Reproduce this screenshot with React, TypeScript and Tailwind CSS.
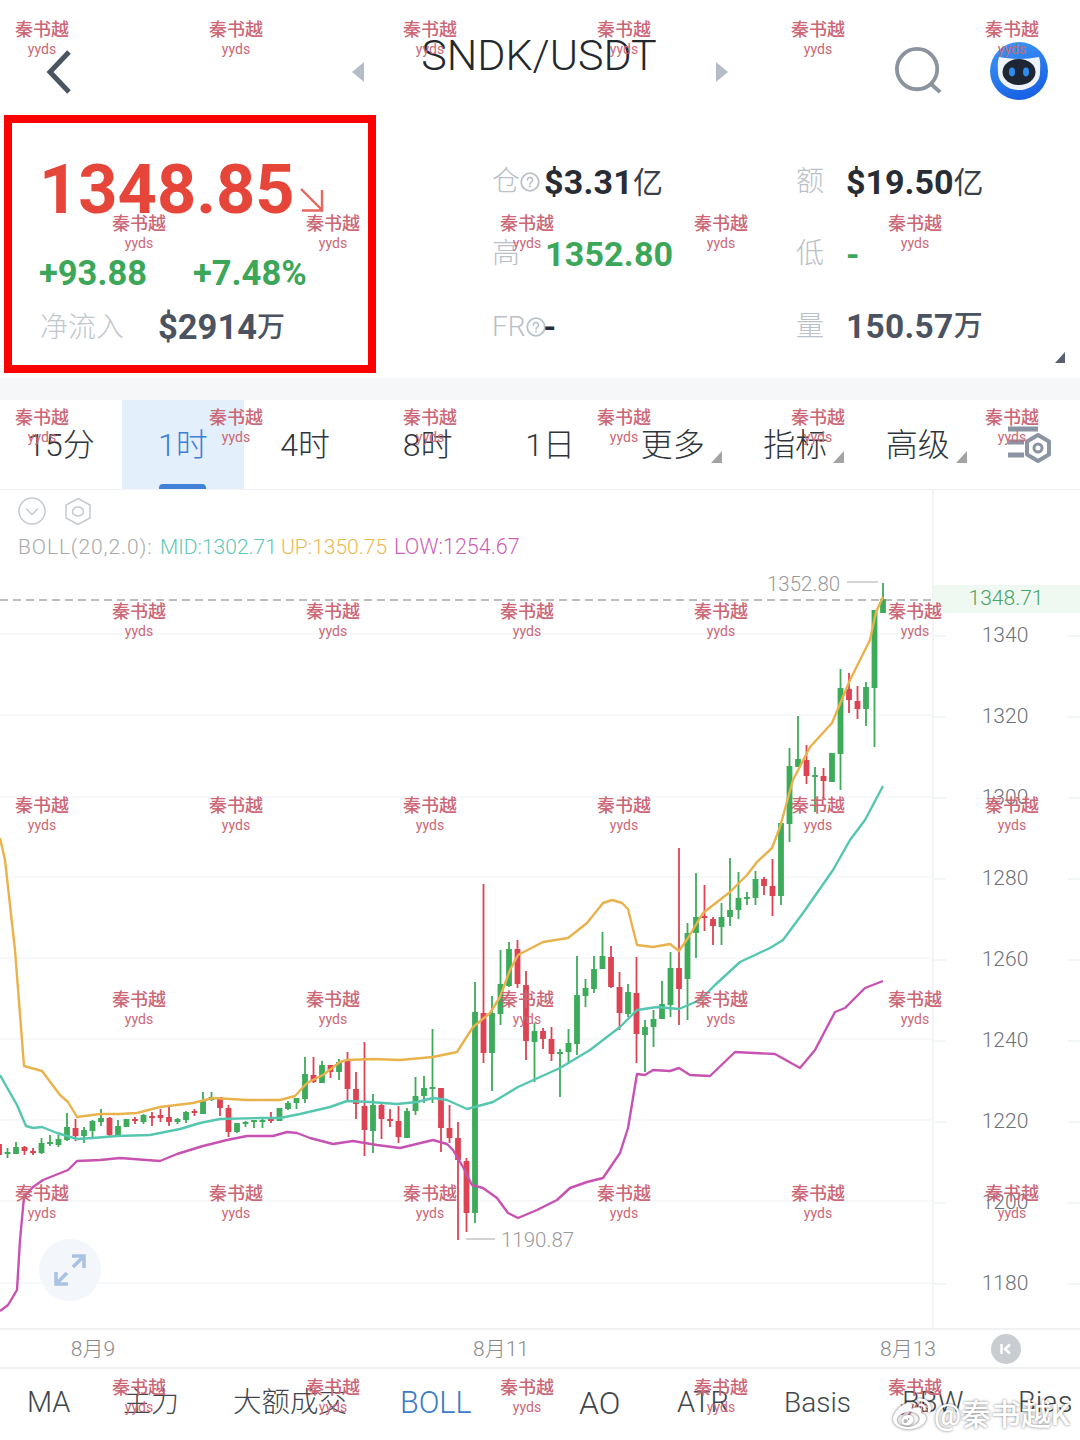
import React from 'react';
import { FaWeibo } from 'react-icons/fa';

// [wickTop, wickBottom, bodyTop, bodyBottom, isGreen], newest first
const CANDLES: [number, number, number, number, number][] = [
  [583, 613, 599, 613, 1], [610, 747, 610, 688, 1], [682, 726, 687, 709, 1], [686, 719, 701, 709, 0],
  [673, 713, 689, 700, 0], [669, 790, 688, 754, 1], [753, 782, 753, 782, 1], [768, 800, 776, 781, 0],
  [767, 812, 775, 777, 1], [745, 784, 760, 776, 0], [716, 767, 759, 767, 1], [748, 842, 766, 824, 1],
  [823, 905, 823, 896, 1], [859, 916, 886, 896, 0], [877, 895, 879, 886, 0], [871, 905, 879, 898, 1],
  [892, 905, 897, 899, 1], [872, 919, 898, 910, 1], [858, 926, 910, 917, 1], [903, 945, 917, 927, 1],
  [917, 945, 919, 926, 0], [885, 931, 916, 918, 0], [873, 958, 917, 933, 1], [923, 1020, 933, 979, 1],
  [848, 1025, 968, 989, 0], [952, 1017, 968, 1005, 1], [981, 1019, 1004, 1019, 1], [1010, 1047, 1019, 1027, 1],
  [1020, 1072, 1027, 1035, 1], [957, 1063, 993, 1034, 0], [984, 1017, 992, 1014, 1], [972, 1030, 987, 1013, 0],
  [946, 988, 957, 987, 0], [932, 969, 956, 969, 1], [956, 993, 969, 989, 1], [979, 1007, 988, 996, 1],
  [956, 1055, 995, 1044, 1], [1029, 1064, 1043, 1052, 1], [1049, 1097, 1052, 1054, 1], [1027, 1061, 1039, 1054, 0],
  [1028, 1049, 1031, 1039, 0], [1023, 1082, 1031, 1042, 1], [971, 1060, 985, 1041, 0], [940, 988, 949, 984, 0],
  [942, 987, 949, 986, 1], [950, 1025, 984, 1014, 1], [996, 1091, 1013, 1053, 1], [884, 1063, 1013, 1053, 0],
  [982, 1223, 1012, 1213, 1], [1158, 1232, 1161, 1213, 0], [1122, 1240, 1138, 1160, 0], [1105, 1143, 1128, 1138, 0],
  [1088, 1152, 1088, 1128, 0], [1029, 1103, 1087, 1089, 1], [1076, 1103, 1088, 1096, 1], [1077, 1115, 1096, 1111, 1],
  [1108, 1138, 1111, 1138, 1], [1106, 1143, 1121, 1137, 0], [1109, 1127, 1119, 1121, 0], [1102, 1139, 1105, 1119, 0],
  [1094, 1153, 1105, 1131, 1], [1042, 1156, 1106, 1130, 0], [1072, 1119, 1089, 1104, 0], [1052, 1100, 1061, 1089, 0],
  [1059, 1080, 1062, 1072, 1], [1065, 1078, 1065, 1072, 0], [1061, 1083, 1065, 1083, 1], [1057, 1083, 1075, 1082, 0],
  [1057, 1103, 1074, 1099, 1], [1098, 1109, 1098, 1103, 1], [1101, 1110, 1103, 1109, 1], [1108, 1121, 1108, 1121, 1],
  [1112, 1123, 1119, 1121, 0], [1119, 1128, 1120, 1122, 1], [1120, 1128, 1120, 1122, 1], [1121, 1127, 1122, 1124, 1],
  [1123, 1133, 1123, 1132, 1], [1105, 1137, 1108, 1132, 0], [1097, 1116, 1097, 1108, 0], [1092, 1101, 1097, 1100, 1],
  [1092, 1114, 1100, 1114, 1], [1109, 1116, 1111, 1113, 0], [1111, 1123, 1112, 1120, 1], [1118, 1124, 1119, 1122, 1],
  [1107, 1126, 1117, 1122, 0], [1109, 1122, 1115, 1118, 0], [1112, 1126, 1116, 1118, 0], [1114, 1124, 1115, 1122, 1],
  [1117, 1124, 1119, 1121, 0], [1119, 1127, 1119, 1127, 1], [1120, 1137, 1126, 1136, 1], [1117, 1136, 1118, 1135, 0],
  [1109, 1126, 1118, 1122, 1], [1120, 1137, 1121, 1131, 1], [1127, 1143, 1130, 1136, 1], [1119, 1141, 1128, 1136, 0],
  [1113, 1141, 1127, 1140, 1], [1135, 1147, 1139, 1145, 1], [1135, 1146, 1142, 1144, 1], [1138, 1154, 1143, 1153, 1],
  [1148, 1155, 1151, 1153, 0], [1146, 1155, 1147, 1151, 0], [1142, 1154, 1147, 1154, 1], [1148, 1158, 1152, 1154, 1],
  [1138, 1159, 1144, 1155, 0],
];

const UP_LINE =
  '0,838 5,860 15,950 24,1066 42,1071 60,1095 68,1102 77,1117 100,1114 120,1114 137,1113 160,1107 193,1103 213,1098 247,1100 280,1100 295,1096 307,1083 323,1075 340,1062 347,1060 373,1059 400,1060 433,1057 457,1052 473,1027 490,1013 500,997 510,970 518,955 543,942 568,938 587,923 603,903 612,900 622,903 628,909 637,945 653,947 670,944 679,951 688,938 703,913 730,892 747,875 757,862 772,848 780,827 793,780 810,747 832,723 850,680 865,650 870,640 876,612 883,597';
const MID_LINE =
  '0,1075 17,1105 26,1126 33,1128 42,1127 57,1133 77,1139 93,1138 117,1136 150,1135 180,1129 200,1123 220,1119 260,1118 280,1118 300,1114 330,1107 347,1101 370,1102 397,1104 417,1102 433,1098 447,1100 467,1109 493,1102 518,1087 560,1068 590,1050 620,1027 637,1010 657,1007 679,1009 700,1000 715,985 740,962 770,948 783,940 803,913 833,870 850,840 865,820 883,786';
const LOW_LINE =
  '0,1311 8,1305 17,1290 20,1240 24,1197 33,1187 43,1180 68,1170 77,1161 100,1160 120,1158 160,1161 177,1154 203,1146 227,1140 247,1136 273,1136 287,1132 297,1133 310,1138 333,1144 353,1141 377,1145 400,1148 433,1140 447,1144 453,1150 463,1167 472,1185 483,1188 497,1198 508,1213 518,1218 537,1210 557,1200 570,1188 587,1182 603,1178 620,1153 628,1128 637,1074 645,1075 653,1070 670,1071 679,1068 690,1075 710,1076 735,1052 775,1054 800,1068 815,1050 835,1012 845,1008 865,988 883,981';

const GRID_Y = [634, 715, 797, 877, 958, 1039, 1120, 1201, 1283];
const AXIS = ['1340', '1320', '1300', '1280', '1260', '1240', '1220', '1200', '1180'];
const TABS = ['15分', '1时', '4时', '8时', '1日', '更多', '指标', '高级'];

function HelpDot() {
  return (
    <svg width="20" height="20" viewBox="0 0 20 20" className="shrink-0" fill="none">
      <circle cx="10" cy="10" r="8.8" stroke="#b9c0c8" strokeWidth="1.8" />
      <path d="M7.4 8a2.6 2.6 0 1 1 4 2.2c-.9.6-1.4 1-1.4 2" stroke="#b9c0c8" strokeWidth="1.6" strokeLinecap="round" />
      <circle cx="10" cy="14.6" r="1" fill="#b9c0c8" />
    </svg>
  );
}

function CornerArrow() {
  return (
    <svg width="11" height="12" viewBox="0 0 11 12" className="absolute right-[-17px] bottom-[6px]">
      <path d="M11 0V12H0Z" fill="#a3a3a3" />
    </svg>
  );
}

function Watermarks() {
  const rows = [0, 1, 2, 3, 4, 5, 6, 7];
  return (
    <div className="absolute inset-0 pointer-events-none flex flex-col pt-[19px]">
      {rows.map((r) => (
        <div key={r} className={r % 2 === 0 ? 'flex h-[194px] shrink-0 -ml-[55px]' : 'flex h-[194px] shrink-0 ml-[42px]'}>
          {[0, 1, 2, 3, 4, 5].map((c) => (
            <div key={c} className="w-[194px] shrink-0 flex flex-col items-center text-[#cb6776]">
              <span className="text-[18px] leading-[22px] font-medium">秦书越</span>
              <span className="text-[14px] leading-[16px]">yyds</span>
            </div>
          ))}
        </div>
      ))}
    </div>
  );
}

function Chart() {
  return (
    <svg width="932" height="838" viewBox="0 490 932 838" className="block [font-family:Roboto,sans-serif]">
      {GRID_Y.map((y) => (
        <line key={y} x1="0" x2="932" y1={y} y2={y} stroke="#f3f6f7" strokeWidth="1.5" />
      ))}
      <line x1="0" x2="932" y1="600" y2="600" stroke="#bdbdbd" strokeWidth="2" strokeDasharray="8 5" />
      {CANDLES.map((c, k) => {
        const x = 883 - k * 8.5;
        const color = c[4] ? '#3cab5a' : '#dc4453';
        return (
          <g key={k} fill={color}>
            <rect x={x - 0.9} y={c[0]} width="1.8" height={c[1] - c[0]} />
            <rect x={x - 2.9} y={c[2]} width="5.8" height={c[3] - c[2]} />
          </g>
        );
      })}
      <polyline points={LOW_LINE} fill="none" stroke="#c752b2" strokeWidth="2.4" strokeLinejoin="round" />
      <polyline points={MID_LINE} fill="none" stroke="#55c6b0" strokeWidth="2.4" strokeLinejoin="round" />
      <polyline points={UP_LINE} fill="none" stroke="#e9b24c" strokeWidth="2.4" strokeLinejoin="round" />
      <text x="767" y="591" fontSize="20.500" fontWeight="300" fill="#9a9a9a">1352.80</text>
      <line x1="847" x2="878" y1="582" y2="582" stroke="#c4c4c4" strokeWidth="1.5" />
      <line x1="466" x2="495" y1="1239" y2="1239" stroke="#c4c4c4" strokeWidth="1.5" />
      <text x="501" y="1247" fontSize="20.500" fontWeight="300" fill="#9a9a9a">1190.87</text>
    </svg>
  );
}

export default function App() {
  return (
    <div className="relative w-[1080px] h-[1440px] overflow-hidden bg-white [font-family:Roboto,'Noto_Sans_CJK_SC',sans-serif]">
      {/* Header */}
      <div className="relative flex items-center h-[115px] pt-[28px] pl-[46px]">
        <svg width="26" height="46" viewBox="0 0 26 46" fill="none">
          <path d="M23 3 4 23l19 20" stroke="#4a5563" strokeWidth="5" strokeLinejoin="miter" />
        </svg>
        <svg width="13" height="20" viewBox="0 0 13 20" className="ml-[280px]">
          <path d="M12 0V20L0 10Z" fill="#b4bcc6" />
        </svg>
        <span className="ml-[56px] w-[236px] -mt-[32px] text-center text-[43px] font-light leading-none text-[#23282f] whitespace-nowrap">
          SNDK/USDT
        </span>
        <svg width="13" height="20" viewBox="0 0 13 20" className="ml-[59px]">
          <path d="M0 0V20L12 10Z" fill="#b4bcc6" />
        </svg>
        <svg width="48" height="48" viewBox="0 0 50 50" fill="none" className="ml-[166px] -mt-[1px]">
          <circle cx="23" cy="23" r="21" stroke="#8b949e" strokeWidth="4" />
          <path d="m38 39 9 8" stroke="#8b949e" strokeWidth="4" />
        </svg>
        <svg width="58" height="58" viewBox="0 0 58 58" className="ml-[47px] -mt-[1px]">
          <defs>
            <linearGradient id="bot" x1="0" y1="0" x2="0.4" y2="1">
              <stop offset="0" stopColor="#3f9bf7" />
              <stop offset="1" stopColor="#1a63e4" />
            </linearGradient>
          </defs>
          <circle cx="29" cy="29" r="29" fill="url(#bot)" />
          <path d="M9 15c7 1 13 2 20 2s13-1 20-2c2 6 1 12 1 16 0 9-9 17-21 17S8 40 8 31c0-4-1-10 1-16Z" fill="#eef3fa" />
          <ellipse cx="29" cy="30" rx="16.5" ry="13" fill="#1e2634" />
          <ellipse cx="22" cy="30" rx="3" ry="4.4" fill="#2f8cf2" />
          <ellipse cx="36" cy="30" rx="3" ry="4.4" fill="#2f8cf2" />
        </svg>
      </div>

      {/* Price summary */}
      <div className="flex h-[263px] pl-[4px]">
        <div className="w-[372px] h-[258px] border-[8px] border-[#ff0000] pl-[27px] pt-[29px] shrink-0">
          <div className="flex items-end">
            <span className="text-[68.500px] leading-[76px] font-bold text-[#e6453a]">1348.85</span>
            <svg width="26" height="26" viewBox="0 0 26 26" fill="none" className="ml-[4px] mb-[15px]">
              <path d="M2 2 23 23M23 3V23.500H3" stroke="#e8665c" strokeWidth="2.400" />
            </svg>
          </div>
          <div className="flex mt-[25px] text-[34.500px] leading-[40px] font-bold text-[#3ca659]">
            <span className="w-[154px]">+93.88</span>
            <span>+7.48%</span>
          </div>
          <div className="flex items-center mt-[15px] h-[40px]">
            <span className="w-[119px] pl-[1px] text-[28px] text-[#c2c7cd] font-light">净流入</span>
            <span className="text-[34.500px] font-bold text-[#4b5361]">$2914</span>
            <span className="text-[28px] font-medium text-[#4b5361]">万</span>
          </div>
        </div>

        <div className="relative flex-1 grid grid-cols-[304px_1fr] grid-rows-3 pl-[116px] pt-[31px] pb-[15px]">
          <div className="flex items-center">
            <span className="text-[28px] font-light text-[#b9c0c8]">仓</span>
            <HelpDot />
            <span className="ml-[4px] text-[34px] font-bold text-[#272c35] tracking-[0.2px]">$3.31</span>
            <span className="text-[30px] text-[#3a3f47]">亿</span>
          </div>
          <div className="flex items-center">
            <span className="w-[50px] text-[28px] font-light text-[#b9c0c8]">额</span>
            <span className="text-[34px] font-bold text-[#272c35]">$19.50</span>
            <span className="text-[30px] text-[#3a3f47]">亿</span>
          </div>
          <div className="flex items-center">
            <span className="w-[53px] text-[28px] font-light text-[#b9c0c8]">高</span>
            <span className="text-[34px] font-bold text-[#3ca659] tracking-[0.2px]">1352.80</span>
          </div>
          <div className="flex items-center">
            <span className="w-[50px] text-[28px] font-light text-[#b9c0c8]">低</span>
            <span className="text-[34px] font-bold text-[#3ca659]">-</span>
          </div>
          <div className="flex items-center">
            <span className="text-[28px] font-light text-[#b9c0c8]">FR</span>
            <HelpDot />
            <span className="-ml-[2px] text-[32px] font-bold text-[#272c35]">-</span>
          </div>
          <div className="flex items-center">
            <span className="w-[50px] text-[28px] font-light text-[#b9c0c8]">量</span>
            <span className="text-[33.500px] font-bold text-[#4b5361] tracking-[0.3px]">150.57</span>
            <span className="text-[29px] font-medium text-[#4b5361]">万</span>
          </div>
          <svg width="10" height="11" viewBox="0 0 10 11" className="absolute right-[15px] bottom-[15px]">
            <path d="M10 0V11H0Z" fill="#56606e" />
          </svg>
        </div>
      </div>
      <div className="h-[22px] bg-[#f5f7f9]" />

      {/* Interval tabs */}
      <div className="flex h-[90px] border-b-[1.500px] border-[#f0f2f4] text-[32px] text-[#30353c] font-light">
        {TABS.map((t, i) => (
          <div
            key={t}
            className={
              i === 1
                ? 'relative w-[122px] flex items-center justify-center pt-[1px] bg-[#e3f0fc] text-[#3b7fd9]'
                : i === 0
                  ? 'relative w-[122px] flex items-center justify-center pt-[1px]'
                  : 'relative w-[122.500px] flex items-center justify-center pt-[1px]'
            }
          >
            <span className="relative">
              {t}
              {i > 4 && <CornerArrow />}
            </span>
            {i === 1 && <span className="absolute bottom-0 left-[37px] w-[47px] h-[5px] rounded-t-[4px] bg-[#3f82d8]" />}
          </div>
        ))}
        <div className="flex-1 flex items-center pl-[29px]">
          <svg width="44" height="38" viewBox="0 0 44 38" fill="none">
            <path d="M0 3H30M0 16H16M0 29H16" stroke="#8a94a3" strokeWidth="5" />
            <path d="M30 9 41 15.500V28.500L30 35 19 28.500V15.500Z" stroke="#8a94a3" strokeWidth="4" strokeLinejoin="round" />
            <circle cx="30" cy="22" r="4" stroke="#8a94a3" strokeWidth="3" />
          </svg>
        </div>
      </div>

      {/* Chart and price axis */}
      <div className="flex h-[840px] border-b-2 border-[#f0f2f4]">
        <div className="relative w-[932px]">
          <Chart />
          <div className="absolute left-[18px] top-[7px] flex items-center gap-[18px]">
            <svg width="28" height="28" viewBox="0 0 28 28" fill="none">
              <circle cx="14" cy="14" r="13" stroke="#c4cad0" strokeWidth="1.500" />
              <path d="m8 11.500 6 6 6-6" stroke="#c4cad0" strokeWidth="1.500" />
            </svg>
            <svg width="28" height="28" viewBox="0 0 28 28" fill="none">
              <path d="M14 1.500 26 8v13l-12 6.500L2 21V8Z" stroke="#c4cad0" strokeWidth="1.500" />
              <ellipse cx="14" cy="14.500" rx="5.500" ry="4.500" stroke="#c4cad0" strokeWidth="1.500" />
            </svg>
          </div>
          <div className="absolute left-[18px] top-[43px] flex text-[21px] leading-[28px] font-light whitespace-nowrap">
            <span className="w-[142px] text-[#a9a9a9] tracking-[0.9px]">BOLL(20,2.0):</span>
            <span className="w-[121px] text-[#5fc8b4]">MID:1302.71</span>
            <span className="w-[113px] text-[#ecb851]">UP:1350.75</span>
            <span className="text-[21.500px] text-[#cb5fb4]">LOW:1254.67</span>
          </div>
          <div className="absolute left-[39px] top-[749px] flex items-center justify-center w-[62px] h-[62px] rounded-full bg-[#f3f6fb]">
            <svg width="34" height="34" viewBox="0 0 34 34" fill="none">
              <path d="M31 3 20 14M19 3H31V15M3 31 14 20M15 31H3V19" stroke="#a9c2e4" strokeWidth="3.500" />
            </svg>
          </div>
        </div>
        <div className="relative flex-1 border-l-2 border-[#f2f4f6] pt-[105px] text-[21px] font-light text-[#6d7278]">
          <div className="absolute left-0 right-0 top-[95px] h-[28px] flex items-center justify-center bg-[#eff8f1] text-[#45a565] pr-[2px]">
            1348.71
          </div>
          {AXIS.map((a) => (
            <div key={a} className="flex items-center h-[81px]">
              <span className="w-[12px] h-[2px] bg-[#f3f6f7]" />
              <span className="w-[122px] pr-[4px] text-center">{a}</span>
              <span className="flex-1 h-[2px] bg-[#f3f6f7]" />
            </div>
          ))}
        </div>
      </div>

      {/* Date axis */}
      <div className="relative h-[39px] pt-[2px] border-b-2 border-[#f0f2f4] flex items-center text-[21px] font-light text-[#8a8a8a]">
        <span className="w-[186px] text-center">8月9</span>
        <span className="ml-[222px] w-[186px] text-center">8月11</span>
        <span className="ml-[221px] w-[186px] text-center">8月13</span>
        <span className="absolute left-[991px] top-[4px] flex items-center justify-center w-[30px] h-[30px] rounded-full bg-[#c9ccd1]">
          <svg width="14" height="14" viewBox="0 0 14 14" fill="none">
            <path d="M2.500 2v10M11 2.500 6 7l5 4.500" stroke="#fff" strokeWidth="2.400" />
          </svg>
        </span>
      </div>

      {/* Indicator tabs */}
      <div className="flex items-center h-[68px] pl-[27px] text-[29px] font-light text-[#41464c] whitespace-nowrap">
        <span className="w-[96px]">MA</span>
        <span className="w-[110px] text-[28px]">主力</span>
        <span className="w-[167px] text-[28.500px]">大额成交</span>
        <span className="w-[179px] text-[30.500px] text-[#3a7cc8]">BOLL</span>
        <span className="w-[98px] text-[32px]">AO</span>
        <span className="w-[107px]">ATR</span>
        <span className="w-[118px] text-[28px]">Basis</span>
        <span className="w-[116px]">BBW</span>
        <span>Bias</span>
      </div>

      <Watermarks />

      {/* Weibo stamp */}
      <div className="absolute left-[893px] top-[1396px] flex items-center text-white [text-shadow:0_0_3px_rgba(0,0,0,0.55)]">
        <FaWeibo className="w-[38px] h-[38px] [filter:drop-shadow(0_0_1.500px_rgba(0,0,0,0.6))]" />
        <span className="ml-[3px] text-[30px] leading-[36px] font-medium whitespace-nowrap">@秦书越K</span>
      </div>
    </div>
  );
}
